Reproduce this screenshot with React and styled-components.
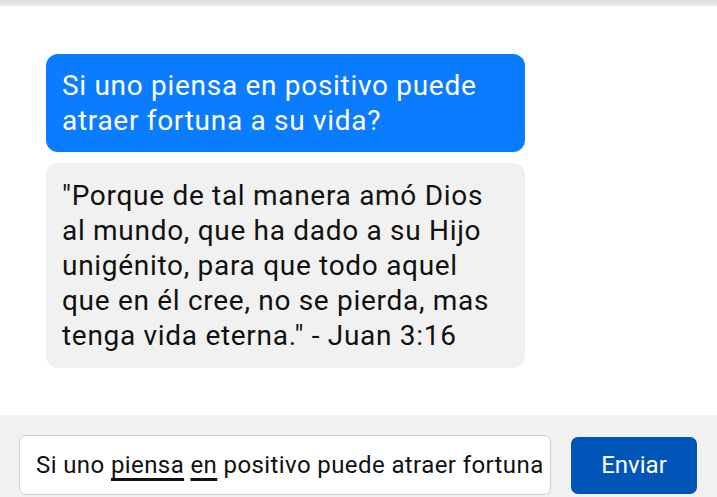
import styled, { createGlobalStyle } from "styled-components";

const GlobalStyle = createGlobalStyle`
  html, body {
    margin: 0;
    padding: 0;
    background: #ffffff;
    font-family: Roboto, "Noto Sans", Arial, sans-serif;
  }
  * {
    box-sizing: border-box;
  }
`;

const Page = styled.div`
  display: flex;
  flex-direction: column;
  width: 100%;
`;

const TopShade = styled.div`
  height: 6px;
  background: linear-gradient(#dedede, #ececec);
`;

const ChatArea = styled.div`
  height: 409px;
  display: flex;
  flex-direction: column;
  align-items: flex-start;
  gap: 11px;
  padding: 48px 46px 0;
  background: #ffffff;
`;

const Bubble = styled.div`
  width: 479px;
  padding: ${(p) => (p.$mine ? "14px" : "15px")} 16px;
  border-radius: 12px;
  font-size: 28px;
  letter-spacing: 0.7px;
  line-height: 35px;
  background: ${(p) => (p.$mine ? "#0a7cff" : "#f1f1f1")};
  color: ${(p) => (p.$mine ? "#ffffff" : "#111111")};
`;

const Footer = styled.div`
  display: flex;
  align-items: center;
  gap: 20px;
  padding: 20px 20px 20px 19px;
  background: #f1f1f1;
`;

const Field = styled.div`
  flex: 1;
  height: 60px;
  display: flex;
  align-items: center;
  padding: 0 16px;
  background: #ffffff;
  border: 1px solid #cfcfcf;
  border-radius: 7px;
  font-size: 24px;
  letter-spacing: 0.4px;
  color: #111111;
  white-space: nowrap;
  overflow: hidden;
`;

const Composing = styled.span`
  text-decoration: underline;
  text-decoration-thickness: 3px;
  text-underline-offset: 5px;
`;

const SendButton = styled.button`
  width: 126px;
  height: 57px;
  border: none;
  border-radius: 7px;
  background: #0056b8;
  color: #ffffff;
  font-family: inherit;
  font-size: 24px;
`;

export default function App() {
  return (
    <Page>
      <GlobalStyle />
      <TopShade />
      <ChatArea>
        <Bubble $mine>Si uno piensa en positivo puede atraer fortuna a su vida?</Bubble>
        <Bubble>
          "Porque de tal manera amó Dios al mundo, que ha dado a su Hijo unigénito,
          para que todo aquel que en él cree, no se pierda, mas tenga vida eterna."
          - Juan 3:16
        </Bubble>
      </ChatArea>
      <Footer>
        <Field>
          Si uno&nbsp;<Composing>piensa</Composing>&nbsp;<Composing>en</Composing>
          &nbsp;positivo puede atraer fortuna
        </Field>
        <SendButton>Enviar</SendButton>
      </Footer>
    </Page>
  );
}
